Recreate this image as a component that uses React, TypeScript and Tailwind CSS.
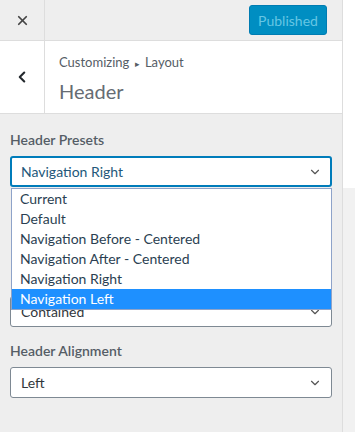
import { X, ChevronLeft, ChevronDown } from "lucide-react";

const presets = [
  "Current",
  "Default",
  "Navigation Before - Centered",
  "Navigation After - Centered",
  "Navigation Right",
  "Navigation Left",
];

function SelectBox({ value, focused }: { value: string; focused?: boolean }) {
  return (
    <div
      className={
        focused
          ? "flex h-[31px] items-center justify-between rounded-[3px] border-2 border-[#007cba] bg-white pl-[9px] pr-[8px] text-[14px] text-[#23587a]"
          : "flex h-[31px] items-center justify-between rounded-[3px] border border-[#7e8993] bg-white pl-[10px] pr-[9px] text-[14px] text-[#32373c]"
      }
    >
      <span>{value}</span>
      <ChevronDown size={14} strokeWidth={2} className="text-[#555]" />
    </div>
  );
}

export default function App() {
  return (
    <div className="flex h-[432px] w-[355px] overflow-hidden bg-[#f1f1f1] font-['Lato',sans-serif]">
      <div className="flex w-[343px] flex-col border-r border-[#ddd] bg-[#eee]">
        {/* top bar */}
        <div className="flex h-[41px] items-center border-b border-[#ddd]">
          <div className="flex h-full w-[45px] items-center justify-center border-r border-[#ddd]">
            <X size={15} strokeWidth={2.8} className="text-[#444]" />
          </div>
          <button className="ml-auto mr-[15px] h-[30px] w-[78px] rounded-[3px] border border-[#007cb2] bg-[#008ec2] text-[14px] text-[#66c6e4]">
            Published
          </button>
        </div>

        {/* section title */}
        <div className="flex h-[73px] border-b border-[#ddd] bg-white">
          <div className="flex w-[45px] items-center justify-center border-r border-[#ddd]">
            <ChevronLeft size={18} strokeWidth={2.8} className="text-[#23282d]" />
          </div>
          <div className="pl-[14px] pt-[12px]">
            <div className="text-[13px] leading-[18px] text-[#555d66]">
              Customizing <span className="px-[2px] text-[9px]">▸</span> Layout
            </div>
            <div className="mt-[5px] text-[20px] leading-[26px] text-[#666c73]">Header</div>
          </div>
        </div>

        {/* controls */}
        <div className="relative px-[10px] pt-[16px]">
          <div>
            <div className="mb-[6px] text-[14px] font-semibold leading-[20px] text-[#555d66]">Header Presets</div>
            <SelectBox value="Navigation Right" focused />
          </div>

          {/* space of the controls hidden under the open list */}
          <div className="mt-[14px] h-[55px]" />

          <div className="mt-[14px] pt-[26px]">
            <SelectBox value="Contained" />
          </div>

          <div className="mt-[14px]">
            <div className="mb-[6px] text-[14px] font-semibold leading-[20px] text-[#555d66]">Header Alignment</div>
            <SelectBox value="Left" />
          </div>

          {/* open dropdown list */}
          <ul className="absolute left-[11px] top-[74px] z-10 w-[321px] border border-[#8ea3c9] bg-white text-[14px] text-[#2b3f52]">
            {presets.map((p) => (
              <li
                key={p}
                className={
                  p === "Navigation Left"
                    ? "h-[20px] bg-[#1e90ff] pl-[8px] leading-[20px] text-white"
                    : "h-[20px] pl-[8px] leading-[20px]"
                }
              >
                {p}
              </li>
            ))}
          </ul>
        </div>
      </div>

      <div className="flex flex-1 flex-col">
        <div className="h-[188px] bg-white" />
        <div className="flex-1 bg-[#f1f1f1]" />
      </div>
    </div>
  );
}
